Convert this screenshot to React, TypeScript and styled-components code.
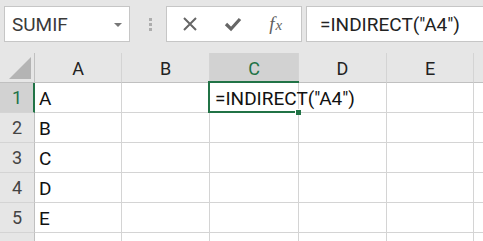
import React from 'react'
import styled, { createGlobalStyle, css } from 'styled-components'

const GREEN = '#217346'
const LINE = '#d4d4d4'

const GlobalStyle = createGlobalStyle`
    html, body {
        margin: 0;
        padding: 0;
        background: #e6e6e6;
        overflow: hidden;
    }
    body {
        font-family: Roboto, 'Liberation Sans', Arial, sans-serif;
    }
`

// the last column and row are only partly in view, so they carry no label
const COLUMNS = ['A', 'B', 'C', 'D', 'E', '']
const WIDTHS = [87, 88, 89, 88, 87, 88]
const ROWS = ['A', 'B', 'C', 'D', 'E', '']

const Sheet = styled.div`
    width: 483px;
    height: 241px;
    overflow: hidden;
    background: #e6e6e6;
`

const Toolbar = styled.div`
    display: flex;
    align-items: center;
    height: 53px;
    padding: 0 0 5px 4px;
    box-sizing: border-box;
`

const Box = styled.div`
    height: 36px;
    box-sizing: border-box;
    background: #fff;
    border: 1px solid #c6c6c6;
    display: flex;
    align-items: center;
`

const NameBox = styled(Box)`
    width: 126px;
    padding: 0 7px 0 7px;
    justify-content: space-between;
    font-size: 19px;
    color: #3a3a3a;
`

const Caret = styled.span`
    width: 0;
    height: 0;
    border-left: 4px solid transparent;
    border-right: 4px solid transparent;
    border-top: 4px solid #777;
    margin-top: 1px;
`

const Grip = styled.div`
    width: 38px;
    display: flex;
    flex-direction: column;
    align-items: center;
    gap: 2px;
    padding-left: 1px;
    margin-right: -3px;
    span {
        width: 3px;
        height: 3px;
        background: #adadad;
    }
`

const Buttons = styled(Box)`
    width: 136px;
    justify-content: space-around;
    padding: 0 4px 0 2px;
    color: #6a6a6a;
`

const Icon = styled.span`
    width: 40px;
    display: flex;
    justify-content: center;
    align-items: center;
`

const Fx = styled(Icon)`
    font-family: 'Liberation Serif', serif;
    font-style: italic;
    font-size: 19px;
    color: #5f5f5f;
    i {
        font-size: 15px;
        margin-left: 1px;
        margin-top: 3px;
    }
`

const FormulaBox = styled(Box)`
    flex: 1;
    margin-left: 4px;
    margin-right: -4px;
    padding-left: 13px;
    font-size: 19px;
    color: #222;
`

const Grid = styled.div`
    display: grid;
    grid-template-columns: 35px ${WIDTHS.map((w) => `${w}px`).join(' ')};
    grid-auto-rows: 30px;
    background: #fff;
`

const Corner = styled.div`
    background: #e6e6e6;
    border-right: 1px solid #c0c0c0;
    border-bottom: 1px solid #c0c0c0;
    box-sizing: border-box;
    display: flex;
    align-items: flex-end;
    justify-content: flex-end;
    padding: 0 3px 3px 0;
`

const Triangle = styled.span`
    width: 0;
    height: 0;
    border-left: 22px solid transparent;
    border-bottom: 22px solid #b4b4b4;
`

const ColHead = styled.div<{ $active?: boolean }>`
    background: ${(p) => (p.$active ? '#d2d2d2' : '#e6e6e6')};
    color: ${(p) => (p.$active ? GREEN : '#222')};
    border-right: 1px solid ${LINE};
    border-bottom: 1px solid #c0c0c0;
    box-sizing: border-box;
    display: flex;
    align-items: center;
    justify-content: center;
    font-size: 18px;
    padding-top: 2px;
`

const RowHead = styled.div<{ $active?: boolean }>`
    background: ${(p) => (p.$active ? '#d2d2d2' : '#e6e6e6')};
    color: ${(p) => (p.$active ? GREEN : '#444')};
    border-bottom: 1px solid ${LINE};
    box-sizing: border-box;
    display: flex;
    align-items: center;
    justify-content: center;
    font-size: 18px;
    ${(p) =>
        p.$active
            ? css`
                  border-right: 2px solid ${GREEN};
                  padding-left: 1px;
              `
            : css`
                  border-right: 1px solid #c0c0c0;
              `}
`

const Cell = styled.div<{ $active?: boolean }>`
    position: relative;
    border-right: 1px solid ${LINE};
    border-bottom: 1px solid ${LINE};
    box-sizing: border-box;
    display: flex;
    align-items: center;
    padding: 1px 0 0 4px;
    font-size: 19px;
    color: #111;
    white-space: nowrap;
    ${(p) =>
        p.$active &&
        css`
            z-index: 1;
            padding-left: 5px;
        `}
`

// editing: the text runs on past the right edge, so that side has no border
const Selection = styled.div`
    position: absolute;
    left: -2px;
    top: -2px;
    right: -1px;
    bottom: -1px;
    border: 2px solid ${GREEN};
    border-right: none;
    pointer-events: none;
`

const Handle = styled.span`
    position: absolute;
    right: -2px;
    bottom: -4px;
    width: 5px;
    height: 5px;
    background: ${GREEN};
    border-left: 1px solid #fff;
    border-top: 1px solid #fff;
`

const Cursor = styled.span`
    display: inline-block;
    width: 1px;
    height: 23px;
    background: #000;
    margin-left: 3px;
`

const CrossIcon = () => (
    <svg width="16" height="16" viewBox="0 0 16 16">
        <path d="M2 2 L14 14 M14 2 L2 14" stroke="#666" strokeWidth="2" fill="none" />
    </svg>
)

const CheckIcon = () => (
    <svg width="18" height="16" viewBox="0 0 18 16">
        <path d="M2 8 L7 13 L16 3" stroke="#666" strokeWidth="3.2" fill="none" />
    </svg>
)

const FORMULA = '=INDIRECT("A4")'

export default function App() {
    return (
        <Sheet>
            <GlobalStyle />
            <Toolbar>
                <NameBox>
                    SUMIF
                    <Caret />
                </NameBox>
                <Grip>
                    <span />
                    <span />
                    <span />
                </Grip>
                <Buttons>
                    <Icon>
                        <CrossIcon />
                    </Icon>
                    <Icon>
                        <CheckIcon />
                    </Icon>
                    <Fx>
                        f<i>x</i>
                    </Fx>
                </Buttons>
                <FormulaBox>{FORMULA}</FormulaBox>
            </Toolbar>
            <Grid>
                <Corner>
                    <Triangle />
                </Corner>
                {COLUMNS.map((c, i) => (
                    <ColHead key={i} $active={c === 'C'}>
                        {c}
                    </ColHead>
                ))}
                {ROWS.map((value, r) => (
                    <React.Fragment key={r}>
                        <RowHead $active={r === 0}>{r < 5 ? r + 1 : ''}</RowHead>
                        {COLUMNS.map((c, i) =>
                            r === 0 && c === 'C' ? (
                                <Cell key={i} $active>
                                    {FORMULA}
                                    <Cursor />
                                    <Selection>
                                        <Handle />
                                    </Selection>
                                </Cell>
                            ) : (
                                <Cell key={i}>{c === 'A' ? value : ''}</Cell>
                            )
                        )}
                    </React.Fragment>
                ))}
            </Grid>
        </Sheet>
    )
}
